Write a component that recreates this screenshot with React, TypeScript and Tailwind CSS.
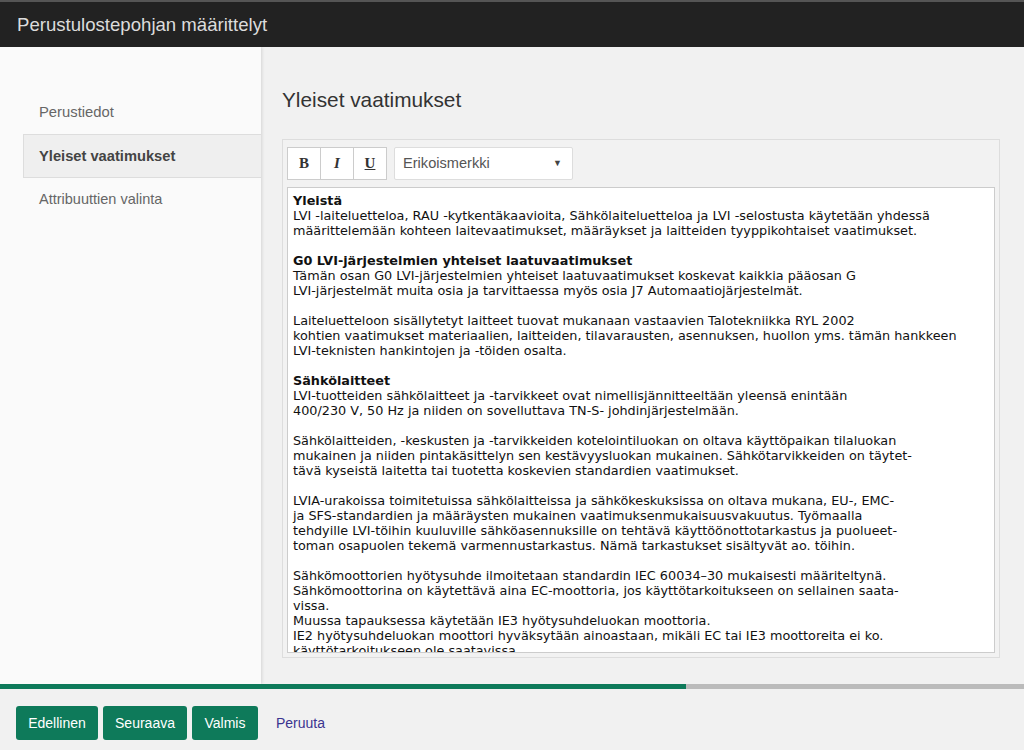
const lines: { t: string; b?: boolean }[] = [
  { t: "Yleistä", b: true },
  { t: "LVI -laiteluetteloa, RAU -kytkentäkaavioita, Sähkölaiteluetteloa ja LVI -selostusta käytetään yhdessä" },
  { t: "määrittelemään kohteen laitevaatimukset, määräykset ja laitteiden tyyppikohtaiset vaatimukset." },
  { t: "" },
  { t: "G0 LVI-järjestelmien yhteiset laatuvaatimukset", b: true },
  { t: "Tämän osan G0 LVI-järjestelmien yhteiset laatuvaatimukset koskevat kaikkia pääosan G" },
  { t: "LVI-järjestelmät muita osia ja tarvittaessa myös osia J7 Automaatiojärjestelmät." },
  { t: "" },
  { t: "Laiteluetteloon sisällytetyt laitteet tuovat mukanaan vastaavien Talotekniikka RYL 2002" },
  { t: "kohtien vaatimukset materiaalien, laitteiden, tilavarausten, asennuksen, huollon yms. tämän hankkeen" },
  { t: "LVI-teknisten hankintojen ja -töiden osalta." },
  { t: "" },
  { t: "Sähkölaitteet", b: true },
  { t: "LVI-tuotteiden sähkölaitteet ja -tarvikkeet ovat nimellisjännitteeltään yleensä enintään" },
  { t: "400/230 V, 50 Hz ja niiden on sovelluttava TN-S- johdinjärjestelmään." },
  { t: "" },
  { t: "Sähkölaitteiden, -keskusten ja -tarvikkeiden kotelointiluokan on oltava käyttöpaikan tilaluokan" },
  { t: "mukainen ja niiden pintakäsittelyn sen kestävyysluokan mukainen. Sähkötarvikkeiden on täytet-" },
  { t: "tävä kyseistä laitetta tai tuotetta koskevien standardien vaatimukset." },
  { t: "" },
  { t: "LVIA-urakoissa toimitetuissa sähkölaitteissa ja sähkökeskuksissa on oltava mukana, EU-, EMC-" },
  { t: "ja SFS-standardien ja määräysten mukainen vaatimuksenmukaisuusvakuutus. Työmaalla" },
  { t: "tehdyille LVI-töihin kuuluville sähköasennuksille on tehtävä käyttöönottotarkastus ja puolueet-" },
  { t: "toman osapuolen tekemä varmennustarkastus. Nämä tarkastukset sisältyvät ao. töihin." },
  { t: "" },
  { t: "Sähkömoottorien hyötysuhde ilmoitetaan standardin IEC 60034–30 mukaisesti määriteltynä." },
  { t: "Sähkömoottorina on käytettävä aina EC-moottoria, jos käyttötarkoitukseen on sellainen saata-" },
  { t: "vissa." },
  { t: "Muussa tapauksessa käytetään IE3 hyötysuhdeluokan moottoria." },
  { t: "IE2 hyötysuhdeluokan moottori hyväksytään ainoastaan, mikäli EC tai IE3 moottoreita ei ko." },
  { t: "käyttötarkoitukseen ole saatavissa." },
];

const App = () => {
  return (
    <div className="flex h-[750px] flex-col overflow-hidden bg-[#f1f1f1] font-['Liberation_Sans',Arial,sans-serif]">
      <div className="flex h-[47px] shrink-0 items-center border-t-2 border-[#555] bg-[#222] pl-[17px] text-[18.6px] text-[#dcdcdc]">
        Perustulostepohjan määrittelyt
      </div>

      <div className="flex flex-1 overflow-hidden">
        <div className="flex w-[261px] shrink-0 flex-col bg-[#fafafa] pt-[43px] shadow-[1px_0_3px_rgba(0,0,0,0.12)]">
          <div className="flex h-[44px] items-center pl-[39px] text-[14.8px] text-[#666]">Perustiedot</div>
          <div className="ml-[23px] flex h-[44px] items-center border border-r-0 border-[#ddd] bg-[#efefef] pl-[15px] text-[14.7px] font-bold text-[#444]">
            Yleiset vaatimukset
          </div>
          <div className="flex h-[44px] items-center pl-[39px] text-[14.5px] text-[#666]">Attribuuttien valinta</div>
        </div>

        <div className="flex flex-1 flex-col pl-[21px] pr-[25px]">
          <h1 className="mt-[40px] h-[52px] text-[20.8px] leading-[26px] text-[#333]">Yleiset vaatimukset</h1>
          <div className="flex h-[519px] w-[718px] flex-col border border-[#ddd] bg-[#f2f2f2] p-[4px] pt-[7px]">
            <div className="flex gap-[7px]">
              <div className="flex h-[33px] bg-white">
                <button className="flex w-[34px] items-center justify-center border border-[#ccc] font-['Liberation_Serif',serif] text-[15px] font-bold text-[#333]">B</button>
                <button className="flex w-[33px] items-center justify-center border border-l-0 border-[#ccc] font-['Liberation_Serif',serif] text-[15px] font-bold italic text-[#333]">I</button>
                <button className="flex w-[33px] items-center justify-center border border-l-0 border-[#ccc] font-['Liberation_Serif',serif] text-[15px] font-bold text-[#333] underline">U</button>
              </div>
              <div className="flex h-[33px] w-[179px] items-center justify-between rounded-[2px] border border-[#ddd] bg-white pl-[8px] pr-[10px] text-[14.6px] text-[#555]">
                <span>Erikoismerkki</span>
                <span className="text-[9px] text-[#444]">▼</span>
              </div>
            </div>
            <div className="mt-[7px] flex-1 overflow-hidden border border-[#ccc] bg-white px-[5px] pt-[5px] font-['DejaVu_Sans',Verdana,sans-serif] text-[12.8px] leading-[15px] text-[#111]">
              {lines.map((l, i) => (
                <div key={i} className={l.b ? "h-[15px] whitespace-pre font-bold" : "h-[15px] whitespace-pre"}>
                  {l.t}
                </div>
              ))}
            </div>
          </div>
        </div>
      </div>

      <div className="flex h-[5px] shrink-0 bg-[#bbb]">
        <div className="h-full w-[686px] bg-[#0e7a5a]" />
      </div>

      <div className="flex h-[61px] shrink-0 items-start gap-[5px] pl-[16px] pt-[17px]">
        <button className="h-[34px] w-[82px] rounded-[3px] bg-[#0e7a5a] text-[14px] text-white">Edellinen</button>
        <button className="h-[34px] w-[84px] rounded-[3px] bg-[#0e7a5a] text-[14px] text-white">Seuraava</button>
        <button className="h-[34px] w-[66px] rounded-[3px] bg-[#0e7a5a] text-[14px] text-white">Valmis</button>
        <a href="#" className="ml-[13px] text-[14px] leading-[34px] text-[#3b3590]">Peruuta</a>
      </div>
    </div>
  );
};

export default App;
